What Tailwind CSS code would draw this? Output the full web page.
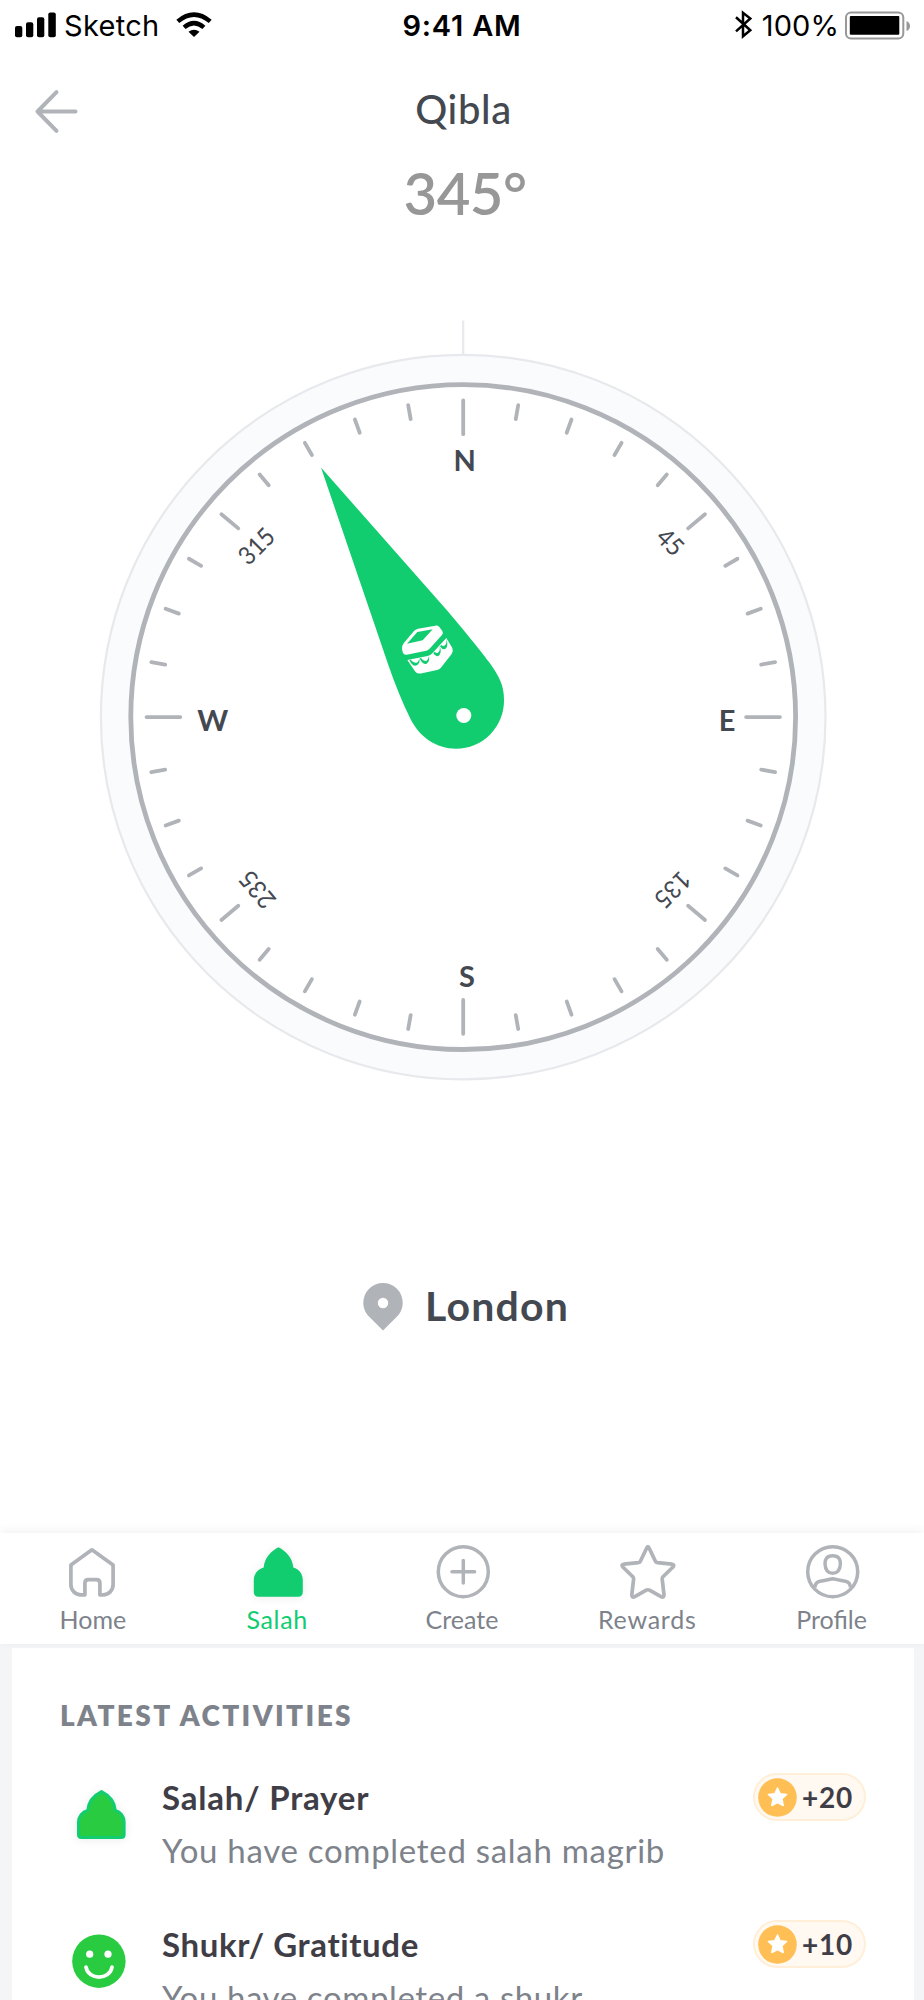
<!DOCTYPE html>
<html lang="en">
<head>
<meta charset="utf-8">
<title>Qibla</title>
<script src="https://cdn.jsdelivr.net/npm/@tailwindcss/browser@4"></script>
</head>
<body class="bg-[#f4f5f7]">
<div class="flex h-[2000px] w-[924px] flex-col overflow-hidden bg-[#f4f5f7] font-[Lato,sans-serif]">

  <main class="flex h-[1533px] shrink-0 flex-col bg-white">
    <!-- Status bar -->
    <div class="grid h-[51px] shrink-0 grid-cols-3 items-center font-[Inter,sans-serif] text-[29px] leading-[51px] text-black">
      <div class="flex items-center pl-[15px]">
        <svg class="h-[51px] w-[42px] shrink-0" viewBox="15 0 42 51"><rect x="15" y="26" width="7.3" height="11.3" rx="2"/><rect x="26" y="22.3" width="7.3" height="15" rx="2"/><rect x="37" y="17.3" width="7.3" height="20" rx="2"/><rect x="48.3" y="12.5" width="7.5" height="24.8" rx="2"/></svg>
        <span class="ml-[7px] tracking-[0.3px]">Sketch</span>
        <svg class="ml-[16px] h-[51px] w-[36px] shrink-0" viewBox="175.5 0 36 51"><g fill="none" stroke="#000" stroke-width="4.5"><path d="M177.3 21.4Q193.5 7.800 209.700 21.400"/><path d="M183.600 27.400Q193.500 19 203.400 27.400"/></g><path d="M188 31.700Q193.500 27.900 199 31.700L193.500 37Z"/></svg>
      </div>
      <div class="text-center font-semibold tracking-[0.8px]">9:41 AM</div>
      <div class="flex items-center justify-end pr-[13px]">
        <svg class="h-[51px] w-[18px] shrink-0" viewBox="735 0 18 51"><path d="M736 17.300L750.300 30.200L743 36.300V12.800L750.300 18.500L736 31.400" fill="none" stroke="#000" stroke-width="2.500"/></svg>
        <span class="ml-[9px] tracking-[0.1px]">100%</span>
        <svg class="ml-[6px] h-[51px] w-[66px] shrink-0" viewBox="845 0 66 51"><rect x="846" y="12.600" width="57.300" height="25.900" rx="5" fill="none" stroke="#989898" stroke-width="2"/><rect x="849.800" y="16" width="49.500" height="18.700" rx="1"/><path d="M906.500 21Q910 22.500 910 26T906.500 31Z" fill="#989898"/></svg>
      </div>
    </div>

    <!-- Title row -->
    <header class="grid h-[113px] shrink-0 grid-cols-3 items-center">
      <svg class="ml-[30px] h-[60px] w-[50px]" viewBox="30 77.500 50 60" fill="none" stroke="#b0b3b8" stroke-width="4" stroke-linecap="round" stroke-linejoin="round"><path d="M75.500 111H37.500M56.500 91.700L37.500 111L56.500 130.300"/></svg>
      <h1 class="pl-[3px] pt-[4px] text-center text-[40px] font-medium leading-[109px] tracking-[0.600px] text-[#434851]">Qibla</h1>
    </header>
    <div class="h-[57px] shrink-0 pl-[6px] text-center text-[58px] font-semibold leading-[57px] tracking-[-0.5px] text-[#979797]">345°</div>

    <!-- Compass -->
    <svg class="h-[879px] w-[924px] shrink-0" viewBox="0 221 924 879">
      <defs>
        <path id="s" d="M463.200 400.400V414.500"/>
        <path id="m" d="M463.200 401.500V423.500"/>
        <path id="l" d="M463.200 400.400V434.200"/>
      </defs>
      <path d="M463.200 320.500V354" stroke="#e8e9ed" stroke-width="2.200"/>
      <circle cx="463.200" cy="717.100" r="362.300" fill="#fafbfd" stroke="#e8e9ed" stroke-width="2.200"/>
      <circle cx="463.200" cy="717.100" r="332.400" fill="#fff" stroke="#b0b3b8" stroke-width="4.800"/>
      <g stroke="#b0b3b8" stroke-width="3.800" stroke-linecap="round">
        <use href="#l"/><use href="#s" transform="rotate(10 463.200 717.100)"/><use href="#s" transform="rotate(20 463.200 717.100)"/><use href="#s" transform="rotate(30 463.200 717.100)"/><use href="#s" transform="rotate(40 463.200 717.100)"/><use href="#m" transform="rotate(50 463.200 717.100)"/><use href="#s" transform="rotate(60 463.200 717.100)"/><use href="#s" transform="rotate(70 463.200 717.100)"/><use href="#s" transform="rotate(80 463.200 717.100)"/>
        <use href="#l" transform="rotate(90 463.200 717.100)"/><use href="#s" transform="rotate(100 463.200 717.100)"/><use href="#s" transform="rotate(110 463.200 717.100)"/><use href="#s" transform="rotate(120 463.200 717.100)"/><use href="#m" transform="rotate(130 463.200 717.100)"/><use href="#s" transform="rotate(140 463.200 717.100)"/><use href="#s" transform="rotate(150 463.200 717.100)"/><use href="#s" transform="rotate(160 463.200 717.100)"/><use href="#s" transform="rotate(170 463.200 717.100)"/>
        <use href="#l" transform="rotate(180 463.200 717.100)"/><use href="#s" transform="rotate(190 463.200 717.100)"/><use href="#s" transform="rotate(200 463.200 717.100)"/><use href="#s" transform="rotate(210 463.200 717.100)"/><use href="#s" transform="rotate(220 463.200 717.100)"/><use href="#m" transform="rotate(230 463.200 717.100)"/><use href="#s" transform="rotate(240 463.200 717.100)"/><use href="#s" transform="rotate(250 463.200 717.100)"/><use href="#s" transform="rotate(260 463.200 717.100)"/>
        <use href="#l" transform="rotate(270 463.200 717.100)"/><use href="#s" transform="rotate(280 463.200 717.100)"/><use href="#s" transform="rotate(290 463.200 717.100)"/><use href="#s" transform="rotate(300 463.200 717.100)"/><use href="#m" transform="rotate(310 463.200 717.100)"/><use href="#s" transform="rotate(320 463.200 717.100)"/><use href="#s" transform="rotate(330 463.200 717.100)"/><use href="#s" transform="rotate(340 463.200 717.100)"/><use href="#s" transform="rotate(350 463.200 717.100)"/>
      </g>
      <g fill="#434851" text-anchor="middle" font-size="29" font-weight="700">
        <text x="464.700" y="471">N</text>
        <text x="727" y="731">E</text>
        <text x="467" y="987.300">S</text>
        <text x="212.800" y="731" textLength="31" lengthAdjust="spacingAndGlyphs">W</text>
      </g>
      <g fill="#434851" text-anchor="middle" font-size="25">
        <text transform="translate(256.300 546) rotate(-45)" y="9" textLength="40" lengthAdjust="spacingAndGlyphs">315</text>
        <text transform="translate(670.300 542) rotate(45)" y="9" textLength="27" lengthAdjust="spacingAndGlyphs">45</text>
        <text transform="translate(672.700 889.700) rotate(135)" y="9" textLength="40" lengthAdjust="spacingAndGlyphs">135</text>
        <text transform="translate(257.300 889.700) rotate(-130)" y="9" textLength="41" lengthAdjust="spacingAndGlyphs">235</text>
      </g>
      <!-- Needle -->
      <path fill="#12cc70" d="M321 467.500L448 611.500C462 628 480 650 489 662C499 676 504 685 504 700A48 48 0 0 1 456 748.700C436 748.700 420 737 411 720C402 702 395 684 388 664Z"/>
      <circle cx="463.800" cy="715.500" r="7.500" fill="#fff"/>
      <!-- Kaaba -->
      <g transform="translate(90 310) scale(.33333)">
        <path fill="#fff" fill-rule="evenodd" d="M941 1000L972 963Q976 958 984 956L1036 947Q1044 946 1048 951L1057 963Q1061 969 1056 975L1018 1017Q1014 1021 1009 1022L950 1034Q942 1035 939 1029L936 1018Q934 1009 941 1000ZM982 966L951 1001L998 991L1028 958Z"/>
        <path fill="#fff" d="M952 1050L1013 1038Q1021 1036 1027 1030L1069 984L1087 1014Q1091 1024 1085 1032L1052 1074Q1048 1079 1041 1080L996 1090Q983 1093 976 1085Z"/>
        <path fill="#12cc70" d="M958 1050Q968 1072 981 1066Q991 1060 988 1045Q985 1060 976 1058Q968 1056 962 1049ZM989 1045Q998 1066 1010 1061Q1020 1054 1017 1038Q1014 1053 1006 1053Q998 1052 993 1044ZM1030 1029Q1038 1044 1048 1036Q1056 1026 1049 1009Q1051 1024 1044 1028Q1039 1031 1034 1025ZM1050 1009Q1060 1024 1069 1014Q1075 1003 1069 986Q1071 1000 1065 1006Q1060 1010 1054 1005Z"/>
      </g>
    </svg>

    <!-- Location -->
    <div class="mt-[175px] flex h-[60px] shrink-0 items-center justify-center pl-[8px]">
      <svg class="mt-[4px] h-[48px] w-[40px]" viewBox="364 1283 40 48"><path fill="#b0b3b8" fill-rule="evenodd" d="M384 1283A19.700 19.700 0 0 1 403.700 1302.700C403.700 1309 401 1313.500 397.500 1317L384 1330.500L370.500 1317C367 1313.500 364.300 1309 364.300 1302.700A19.700 19.700 0 0 1 384 1283ZM384 1297.800A5.200 5.200 0 1 0 384 1308.200A5.200 5.200 0 1 0 384 1297.800Z"/></svg>
      <span class="ml-[22px] pt-[2px] text-[41px] font-bold leading-[60px] tracking-[1.200px] text-[#434851]">London</span>
    </div>
  </main>

  <!-- Tab bar -->
  <nav class="relative grid h-[111px] shrink-0 grid-cols-5 bg-white pt-[7px] text-center text-[25px] leading-[30px] text-[#7d828b] shadow-[0_-2px_10px_rgba(0,0,0,0.06)]">
    <div class="flex flex-col items-center">
      <svg class="h-[64px] w-[60px]" viewBox="-0.600 0 60 64" fill="none" stroke="#b0b3b8" stroke-width="3.700" stroke-linejoin="round"><path d="M29.300 9.800L50.500 25V44.800a10 10 0 0 1-10 10H37.300V43.200q0-3.500-3.500-3.500h-8q-3.500 0-3.500 3.500V54.800H18.300a10 10 0 0 1-10-10V25Z"/></svg>
      <span class="pl-[1px]">Home</span>
    </div>
    <div class="flex flex-col items-center text-[#12cc70]">
      <svg class="h-[64px] w-[60px] drop-shadow-[0_1px_4px_rgba(0,0,0,0.08)]" viewBox="0 0 60 64"><path fill="#12cc70" d="M31.500 7.300C39 11 45.500 18 46.300 27.500C52 29 55.800 34 55.800 40V52q0 4.700-4.700 4.700H11.500q-4.700 0-4.700-4.700V40C6.800 34 11 29 16.700 27.500C17.500 18 24 11 31.500 7.300Z"/></svg>
      <span class="tracking-[0.700px]">Salah</span>
    </div>
    <div class="flex flex-col items-center">
      <svg class="h-[64px] w-[60px]" viewBox="0 0 60 64" fill="none" stroke="#b0b3b8" stroke-width="3.500" stroke-linecap="round"><circle cx="31.300" cy="31.700" r="25"/><path d="M20 31.700H42.600M31.300 20.400V43"/></svg>
      <span>Create</span>
    </div>
    <div class="flex flex-col items-center">
      <svg class="h-[64px] w-[60px]" viewBox="0 0 60 64" fill="none" stroke="#b0b3b8" stroke-width="3.700" stroke-linejoin="round"><path d="M29.700 8Q30.900 5 32.100 8L38.300 21Q39 22.500 40.500 22.700L55 24.200Q58 24.800 56 27L46 36.800Q45 37.900 45.200 39.300L47 54.800Q47 58 44 56.600L32.500 50.200Q30.900 49.300 29.300 50.200L17.800 56.600Q14.800 58 14.800 54.800L16.600 39.300Q16.800 37.900 15.800 36.800L5.800 27Q3.800 24.800 6.800 24.200L21.300 22.700Q22.800 22.500 23.500 21Z"/></svg>
      <span class="pl-[1px] tracking-[0.750px]">Rewards</span>
    </div>
    <div class="flex flex-col items-center">
      <svg class="h-[64px] w-[60px]" viewBox="0 0 60 64" fill="none" stroke="#b0b3b8" stroke-width="3.500"><circle cx="30.700" cy="31.700" r="25"/><path d="M30.700 15.800C36.500 15.800 38.700 19 38.400 24C38 30 35 33.300 30.700 33.300S23.400 30 23 24C22.700 19 24.900 15.800 30.700 15.800ZM13 47.500C13 44 15 42 18 41.300C23 40.500 27 39.500 30.700 38.700C34.500 39.500 38.500 40.500 43.400 41.300C46.500 42 48.400 44 48.400 47.500"/></svg>
      <span>Profile</span>
    </div>
  </nav>

  <!-- Activities -->
  <section class="mt-[4px] ml-[12px] w-[902px] grow bg-white px-[48px] pt-[47px]">
    <h2 class="text-[28px] font-extrabold leading-[40px] tracking-[2.400px] text-[#7d828b]">LATEST ACTIVITIES</h2>
    <div class="mt-[39px] flex h-[147px]">
      <svg class="h-[80px] w-[102px] shrink-0 drop-shadow-[0_1px_4px_rgba(0,0,0,0.08)]" viewBox="0 0 102 80"><path transform="translate(12.200 10.800) scale(.93)" fill="#29cc40" stroke="#12cc70" stroke-width="3.300" d="M31.500 7.300C39 11 45.500 18 46.300 27.500C52 29 55.800 34 55.800 40V53.500q0 3.200-3.200 3.200H10q-3.200 0-3.200-3.200V40C6.800 34 11 29 16.700 27.500C17.500 18 24 11 31.500 7.300Z"/></svg>
      <div class="grow whitespace-nowrap text-[33px] leading-[46px]">
        <h3 class="font-bold tracking-[0.800px] text-[#3f3e47]">Salah/ Prayer</h3>
        <p class="mt-[7px] tracking-[0.700px] text-[#7d828b]">You have completed salah magrib</p>
      </div>
      <div class="-mt-px flex h-[48px] w-[113px] shrink-0 items-center rounded-full border-2 border-[#ffefd8] bg-[#fff9f2] pl-[3px]">
        <svg class="h-[39px] w-[39px] shrink-0" viewBox="0 0 39 39"><circle cx="19.500" cy="19.500" r="19.300" fill="#ffbf55"/><path fill="#fff" stroke="#fff" stroke-width="1.500" stroke-linejoin="round" d="M19.500 10L22.200 15.700L28.600 16.400L23.900 20.700L25.200 27.500L19.500 24.500L13.800 27.500L15.100 20.700L10.400 16.400L16.800 15.700Z"/></svg>
        <span class="ml-[5px] text-[28px] font-bold leading-[44px] tracking-[0.700px] text-[#3f3e47]">+20</span>
      </div>
    </div>
    <div class="flex h-[147px]">
      <svg class="h-[80px] w-[102px] shrink-0" viewBox="0 0 102 80"><circle cx="38.900" cy="40.200" r="26.700" fill="#29cc40"/><circle cx="29.700" cy="33.200" r="3.600" fill="#fff"/><circle cx="48" cy="33.200" r="3.600" fill="#fff"/><path d="M26 46C28 59.500 50 59.500 52 46" fill="none" stroke="#fff" stroke-width="3.700" stroke-linecap="round"/></svg>
      <div class="grow whitespace-nowrap text-[33px] leading-[46px]">
        <h3 class="font-bold tracking-[0.600px] text-[#3f3e47]">Shukr/ Gratitude</h3>
        <p class="mt-[7px] tracking-[0.600px] text-[#7d828b]">You have completed a shukr</p>
      </div>
      <div class="-mt-px flex h-[48px] w-[113px] shrink-0 items-center rounded-full border-2 border-[#ffefd8] bg-[#fff9f2] pl-[3px]">
        <svg class="h-[39px] w-[39px] shrink-0" viewBox="0 0 39 39"><circle cx="19.500" cy="19.500" r="19.300" fill="#ffbf55"/><path fill="#fff" stroke="#fff" stroke-width="1.500" stroke-linejoin="round" d="M19.500 10L22.200 15.700L28.600 16.400L23.900 20.700L25.200 27.500L19.500 24.500L13.800 27.500L15.100 20.700L10.400 16.400L16.800 15.700Z"/></svg>
        <span class="ml-[5px] text-[28px] font-bold leading-[44px] tracking-[0.700px] text-[#3f3e47]">+10</span>
      </div>
    </div>
  </section>
</div>
</body>
</html>
